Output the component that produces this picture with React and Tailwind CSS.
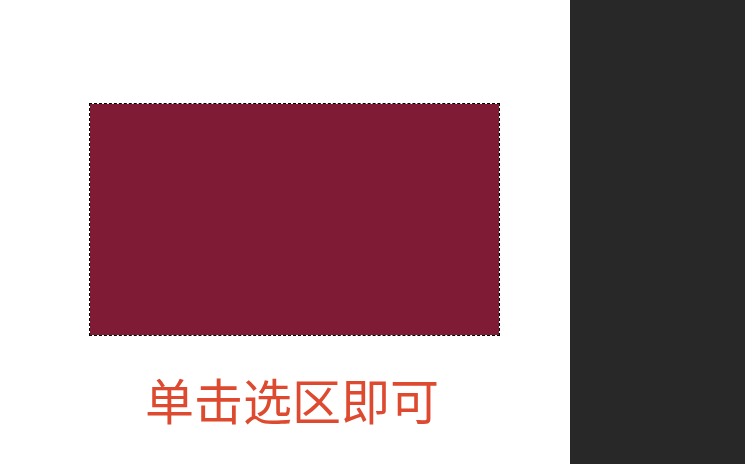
export default function App() {
  return (
    <div className="flex h-[464px] w-[745px] overflow-hidden bg-white">
      <div className="flex w-[570px] flex-col pl-[89px] pt-[103px]">
        <div className="h-[233px] w-[411px] border border-dashed border-black bg-[#7f1b35] bg-clip-padding" />
        <div
          className="mt-[38px] w-[406px] text-center text-[49px] leading-none text-[#de4a2f]"
          style={{ fontFamily: '"Noto Sans CJK SC", sans-serif' }}
        >
          单击选区即可
        </div>
      </div>
      <div className="flex-1 bg-[#282828]" />
    </div>
  );
}
